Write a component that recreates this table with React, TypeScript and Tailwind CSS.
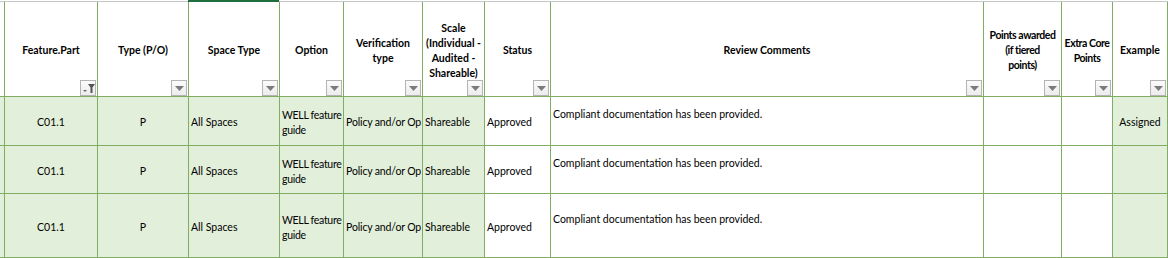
import React from 'react';

type Col = {
  head: string[];
  filter?: 'sort' | 'drop';
  fill: boolean;
  align: 'center' | 'left';
  tight?: boolean;
};

const cols: Col[] = [
  { head: [], fill: true, align: 'left' },
  { head: ['Feature.Part'], filter: 'sort', fill: true, align: 'center' },
  { head: ['Type (P/O)'], filter: 'drop', fill: true, align: 'center' },
  { head: ['Space Type'], filter: 'drop', fill: true, align: 'left' },
  { head: ['Option'], filter: 'drop', fill: true, align: 'left' },
  { head: ['Verification', 'type'], filter: 'drop', fill: true, align: 'left' },
  { head: ['Scale', '(Individual -', 'Audited -', 'Shareable)'], filter: 'drop', fill: true, align: 'left' },
  { head: ['Status'], filter: 'drop', fill: false, align: 'left' },
  { head: ['Review Comments'], filter: 'drop', fill: false, align: 'left' },
  { head: ['Points awarded', '(if tiered', 'points)'], filter: 'drop', fill: false, align: 'left', tight: true },
  { head: ['Extra Core', 'Points'], filter: 'drop', fill: false, align: 'left', tight: true },
  { head: ['Example'], filter: 'drop', fill: true, align: 'center' },
  { head: [], fill: false, align: 'left' },
];

const rows = [
  { example: 'Assigned' },
  { example: '' },
  { example: '' },
];

function FilterButton({ kind }: { kind: 'sort' | 'drop' }) {
  return (
    <div className="absolute right-[1px] bottom-0 w-[16px] h-[16px] border border-[#b4b4b4] bg-gradient-to-b from-[#fbfbfb] to-[#ececec] flex items-center justify-center">
      {kind === 'drop' ? (
        <svg width="9" height="5" viewBox="0 0 9 5">
          <polygon points="0,0 9,0 4.5,5" fill="#7b7b7b" />
        </svg>
      ) : (
        <svg width="13" height="12" viewBox="0 0 13 12">
          <polygon points="1,8 5,8 3,10" fill="#6a6a6a" />
          <polygon points="6,2 13,2 10.5,5.5 10.5,11 8.5,11 8.5,5.5" fill="#555555" />
        </svg>
      )}
    </div>
  );
}

export default function App() {
  return (
    <div
      className="w-[1168px] h-[258px] overflow-hidden bg-white text-black"
      style={{ fontFamily: 'Lato, "Open Sans", sans-serif' }}
    >
      {/* top edge, selected column marker over Space Type */}
      <div className="flex h-[2px]">
        <div className="w-[188px] border-b border-[#c4c4c4]" />
        <div className="w-[91px] bg-[#1f6e3e]" />
        <div className="flex-1 border-b border-[#c4c4c4]" />
      </div>

      <div className="grid grid-cols-[4px_92px_90px_90px_63px_78px_61px_65px_432px_77px_50px_54px_10px] grid-rows-[94px_48px_47px_63px] gap-px pb-px bg-[#80ad62] text-[10.5px]">
        {/* header */}
        {cols.map((c, i) => (
          <div
            key={'h' + i}
            className="relative bg-white flex items-center justify-center text-center font-bold leading-[15px] pt-[3px]"
          >
            {c.head.length > 0 && (
              <div className={c.tight ? 'tracking-[-0.45px]' : ''}>
                {c.head.map((l) => (
                  <div key={l} className="whitespace-nowrap">
                    {l}
                  </div>
                ))}
              </div>
            )}
            {c.filter && <FilterButton kind={c.filter} />}
          </div>
        ))}

        {/* body */}
        {rows.map((r, ri) =>
          cols.map((c, i) => {
            const bg = c.fill ? 'bg-[#e2efda]' : 'bg-white';
            let content: React.ReactNode = null;
            if (i === 1) content = 'C01.1';
            if (i === 2) content = 'P';
            if (i === 3) content = 'All Spaces';
            if (i === 4)
              content = (
                <span className="leading-[15px] tracking-[-0.3px]">
                  WELL feature
                  <br />
                  guide
                </span>
              );
            // text is cut by the next column in the sheet
            if (i === 5) content = <span className="tracking-[-0.15px]">Policy and/or Op</span>;
            if (i === 6) content = 'Shareable';
            if (i === 7) content = 'Approved';
            if (i === 8)
              content = (
                <span className="leading-[15px]">
                  Compliant documentation has been provided.
                  <br />
                  &nbsp;
                </span>
              );
            if (i === 11) content = r.example;
            return (
              <div
                key={'r' + ri + '-' + i}
                className={`${bg} flex items-center overflow-hidden whitespace-nowrap ${
                  c.align === 'center' ? 'justify-center' : 'justify-start pl-[2px]'
                } ${i === 8 ? 'pt-[2px]' : 'pt-[4px]'}`}
              >
                {content}
              </div>
            );
          })
        )}
      </div>
    </div>
  );
}
